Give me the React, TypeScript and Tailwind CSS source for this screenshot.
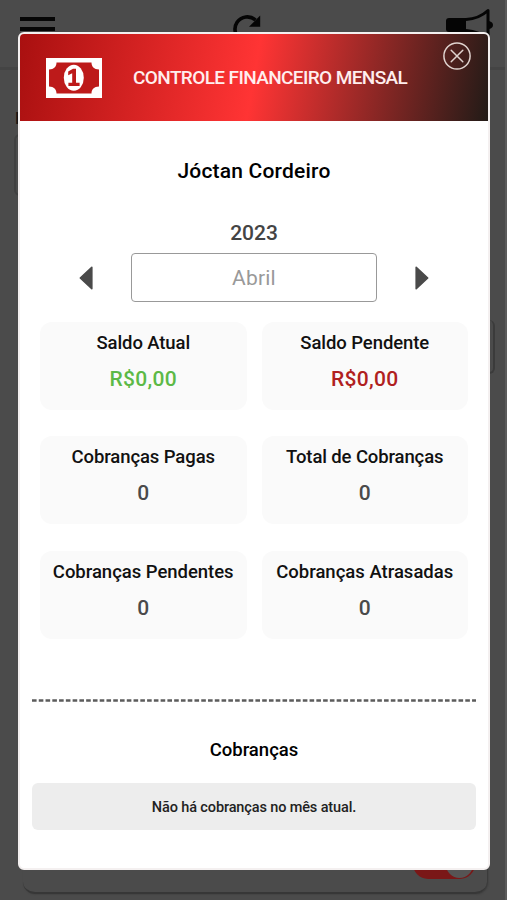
import clsx from "clsx";

type Summary = {
  label: string;
  value: string;
  labelClass: string;
  valueClass: string;
};

const summaries: Summary[] = [
  { label: "Saldo Atual", value: "R$0,00", labelClass: "tracking-[-0.1px]", valueClass: "text-[#5cb946] tracking-[0.3px]" },
  { label: "Saldo Pendente", value: "R$0,00", labelClass: "tracking-[-0.08px]", valueClass: "text-[#b02020] tracking-[0.3px]" },
  { label: "Cobranças Pagas", value: "0", labelClass: "tracking-[-0.1px]", valueClass: "text-[#4a4a4a]" },
  { label: "Total de Cobranças", value: "0", labelClass: "tracking-[-0.12px]", valueClass: "text-[#4a4a4a]" },
  { label: "Cobranças Pendentes", value: "0", labelClass: "tracking-[-0.03px]", valueClass: "text-[#4a4a4a]" },
  { label: "Cobranças Atrasadas", value: "0", labelClass: "tracking-[0px]", valueClass: "text-[#4a4a4a]" },
];

function MoneyIcon() {
  return (
    <svg width="56" height="40" viewBox="0 0 56 40">
      <rect width="56" height="40" fill="#fff" />
      <path
        d="M10.5 4.5H45.5C45.5 8.5 48 11.5 53 11.5V28.5C48 28.5 45.5 31.5 45.5 35.5H10.5C10.5 31.5 8 28.5 3 28.5V11.5C8 11.5 10.5 8.5 10.5 4.5Z"
        fill="#bd1a1a"
      />
      <ellipse cx="27.8" cy="19.7" rx="10" ry="13" fill="#fff" />
      <path d="M22.2 13.6L27 10.8H30V24.8H33.6V28H22.4V24.8H26.2V15.2L22.2 17.2Z" fill="#bd1a1a" />
    </svg>
  );
}

function CloseIcon() {
  return (
    <svg width="28" height="28" viewBox="0 0 28 28" fill="none" stroke="#e0d3cf" strokeWidth="1.5" strokeLinecap="round">
      <circle cx="14" cy="14" r="13.1" />
      <path d="M8.2 8.2L19.8 19.8M19.8 8.2L8.2 19.8" />
    </svg>
  );
}

function Arrow({ next }: { next?: boolean }) {
  return (
    <button aria-label={next ? "Próximo mês" : "Mês anterior"}>
      <svg width="14" height="24" viewBox="0 0 14 24" className={clsx(next && "rotate-180")}>
        <path d="M12.8 1.3V22.7L1.3 12Z" fill="#4a4a4a" stroke="#4a4a4a" strokeWidth="1.6" strokeLinejoin="round" />
      </svg>
    </button>
  );
}

// Dimmed page that stays visible around the modal
function PageBehind() {
  return (
    <div className="flex h-full flex-col border-r-2 border-[#5b5b5b] bg-[#4b4b4b]">
      <div className="flex h-[70px] shrink-0 items-start justify-between border-b-3 border-[#444] pr-3 pl-5">
        <div className="mt-[17px] flex w-[35px] flex-col gap-[6px]">
          <span className="h-1 bg-[#060606]" />
          <span className="h-1 bg-[#060606]" />
          <span className="h-1 bg-[#060606]" />
        </div>
        <svg width="32" height="32" viewBox="0 0 32 32" fill="none" className="mt-[13px] mr-1" stroke="#050505" strokeWidth="3.6">
          <path d="M27 20A12.3 12.3 0 1 1 23.5 7" />
          <path d="M28.2 2.5V13.8H17Z" fill="#050505" stroke="none" />
        </svg>
        <svg width="48" height="40" viewBox="0 0 48 40" className="mt-2">
          <path d="M4 10H21V24H4Q1 24 1 21V13Q1 10 4 10Z" fill="#050505" />
          <path d="M21 11.5C30 11 37 8 43 2.5V32C37 26 30 23 21 22.5" fill="none" stroke="#050505" strokeWidth="3" strokeLinejoin="round" />
          <path d="M44 13Q48 14 48 17Q48 20 44 21Z" fill="#050505" />
        </svg>
      </div>
      <div className="mt-[38px] ml-[15px] font-['Roboto'] text-[17px] leading-5 text-[#151515]">E</div>
      <div className="mr-5 ml-3.5 mt-1.5 h-[62px] shrink-0 rounded-md border-2 border-[#404040]" />
      <div className="mr-[10px] ml-5 mt-[124px] h-[54px] shrink-0 rounded-md border-r-2 border-b-2 border-[#3b3b3b]" />
      <div className="mr-[18px] mb-[6px] ml-[23px] flex flex-1 items-end justify-end rounded-xl border-b-2 border-[#373737] pr-[12px] pb-[13px] shadow-[1px_0_2px_#373737]">
        <div className="flex h-[30px] w-[62px] items-center justify-end rounded-full bg-[#7a1717] pr-0.5">
          <span className="size-[27px] rounded-full bg-[#555]" />
        </div>
      </div>
    </div>
  );
}

export default function App() {
  return (
    <div className="relative h-[900px] w-[507px] overflow-hidden font-['Roboto',sans-serif] font-medium">
      <PageBehind />

      <div className="absolute top-8 left-[18px] flex h-[838px] w-[472px] flex-col rounded-md border-2 border-[#f4f0f0] bg-white">
        <header className="relative flex h-[87px] shrink-0 items-center rounded-t-[4px] bg-[linear-gradient(100deg,#a91010_0%,#ff3434_50%,#221b17_100%)] pl-[26px]">
          <MoneyIcon />
          <h1 className="ml-[31px] text-[19px] leading-6 tracking-[-0.61px] whitespace-nowrap text-[#ffeeee]">
            CONTROLE FINANCEIRO MENSAL
          </h1>
          <button aria-label="Fechar" className="absolute top-2 right-[17px]">
            <CloseIcon />
          </button>
        </header>

        <h2 className="mt-[36px] text-center text-[21px] leading-7 tracking-[0.2px] text-black">Jóctan Cordeiro</h2>

        <p className="mt-[34px] text-center text-[21px] leading-7 text-[#444]">2023</p>
        <div className="mt-[6px] flex items-center justify-between px-[59px]">
          <Arrow />
          <div className="flex h-[49px] w-[246px] items-center justify-center rounded-[4px] border border-[#999] pt-[3px] text-[21px] font-normal tracking-[0.2px] text-[#999]">
            Abril
          </div>
          <Arrow next />
        </div>

        <div className="mt-[19.5px] grid grid-cols-2 gap-x-[15px] gap-y-[26.5px] px-5">
          {summaries.map((item) => (
            <div key={item.label} className="flex h-[88px] flex-col items-center rounded-xl bg-[#fafafa] pt-[9px]">
              <span className={clsx("text-[18.5px] leading-6 whitespace-nowrap text-[#111]", item.labelClass)}>{item.label}</span>
              <span className={clsx("mt-3 text-[21px] leading-6", item.valueClass)}>{item.value}</span>
            </div>
          ))}
        </div>

        <svg width="444" height="3" className="mt-[60.5px] ml-3 shrink-0">
          <path d="M0 1.5H444" stroke="#5c5c5c" strokeWidth="2.4" strokeDasharray="4.6 2.17" />
        </svg>

        <h3 className="mt-[36px] text-center text-[18.5px] leading-6 text-black">Cobranças</h3>
        <div className="mx-3 mt-[21px] flex h-[47px] items-center justify-center rounded-md bg-[#ededed] pt-[3px] text-[14.5px] tracking-[-0.13px] text-[#222]">
          Não há cobranças no mês atual.
        </div>
      </div>
    </div>
  );
}
